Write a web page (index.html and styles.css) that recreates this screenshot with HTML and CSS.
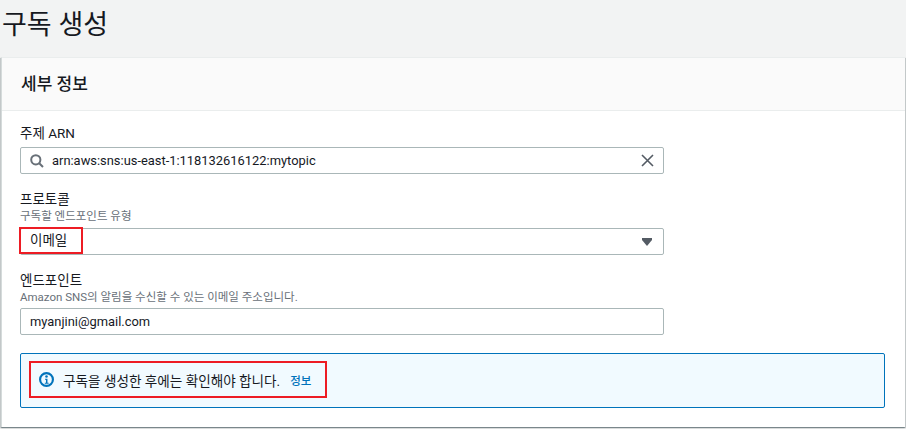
FILE: index.html
```html
<!DOCTYPE html>
<html lang="ko">
<head>
<meta charset="utf-8">
<title>구독 생성</title>
<link rel="stylesheet" href="styles.css">
</head>
<body>
<h1 class="page-title">구독 생성</h1>
<section class="card">
  <header class="card-header"><h2>세부 정보</h2></header>
  <div class="card-body">
    <div class="field field-arn">
      <label class="label">주제 ARN</label>
      <div class="control">
        <svg class="icon-search" width="14" height="14" viewBox="0 0 14 14"><circle cx="5.8" cy="5.8" r="4.6" fill="none" stroke="#687078" stroke-width="2"/><path d="M9.2 9.2L13 13" stroke="#687078" stroke-width="2"/></svg>
        <span class="value value-latin grow">arn:aws:sns:us-east-1:118132616122:mytopic</span>
        <svg class="icon-x" width="13" height="13" viewBox="0 0 13 13"><path d="M1 1L12 12M12 1L1 12" stroke="#545b64" stroke-width="1.6"/></svg>
      </div>
    </div>
    <div class="field field-protocol">
      <label class="label">프로토콜</label>
      <p class="desc">구독할 엔드포인트 유형</p>
      <div class="control control-select">
        <span class="value value-select grow">이메일</span>
        <svg class="icon-caret" width="10" height="8" viewBox="0 0 10 8"><path d="M0 0H10V2L5 8L0 2Z" fill="#545b64"/></svg>
        <span class="mark mark-select"></span>
      </div>
    </div>
    <div class="field field-endpoint">
      <label class="label">엔드포인트</label>
      <p class="desc">Amazon SNS의 알림을 수신할 수 있는 이메일 주소입니다.</p>
      <div class="control"><span class="value value-latin">myanjini@gmail.com</span></div>
    </div>
    <div class="alert">
      <div class="alert-inner">
        <svg class="icon-info" width="15" height="15" viewBox="0 0 14 14"><circle cx="7" cy="7" r="6" fill="none" stroke="#0073bb" stroke-width="2"/><circle cx="7" cy="4.2" r="1.2" fill="#0073bb"/><path d="M5.6 6.2H7.9V10H9V11H5.4V10H6.5V7.2H5.6Z" fill="#0073bb"/></svg>
        <span class="alert-text">구독을 생성한 후에는 확인해야 합니다.</span>
        <a class="alert-link">정보</a>
      </div>
    </div>
  </div>
</section>
</body>
</html>
```
FILE: styles.css
```css
* { box-sizing: border-box; }
html, body { margin: 0; padding: 0; }
body {
  width: 906px;
  height: 429px;
  overflow: hidden;
  background: #f2f3f3;
  color: #16191f;
  font-family: Roboto, "Noto Sans CJK KR", sans-serif;
  font-size: 13.5px;
}
.page-title {
  margin: 0;
  height: 57px;
  padding: 7px 0 0 2px;
  font-size: 27px;
  line-height: 36px;
  font-weight: 400;
}
.card {
  margin-left: 1px;
  width: 904px;
  height: 370px;
  background: #fff;
  border-top: 1px solid #eaeded;
  border-left: 1px solid #d5dbdb;
  box-shadow: 0 1px 1px 0 rgba(0, 28, 36, .3), 1px 1px 1px 0 rgba(0, 28, 36, .15), -1px 1px 1px 0 rgba(0, 28, 36, .15);
}
.card-header {
  height: 53px;
  padding: 0 0 3px 19px;
  background: #fafafa;
  border-bottom: 1px solid #eaeded;
  display: flex;
  align-items: center;
}
.card-header h2 {
  margin: 0;
  font-size: 17px;
  font-weight: 500;
}
.card-body { padding: 0 19px 0 18px; }
.field { width: 644px; }
.field-arn { padding-top: 13px; }
.field-protocol { padding-top: 16px; }
.field-endpoint { padding-top: 16px; }
.label {
  display: block;
  font-size: 13.5px;
  line-height: 18px;
  height: 18px;
}
.field-arn .label { margin-bottom: 5px; }
.desc {
  margin: 0 0 4px;
  padding-top: 1px;
  font-size: 11.5px;
  line-height: 14px;
  color: #687078;
}
.field-protocol .desc { margin-bottom: 5px; }
.control {
  position: relative;
  height: 27px;
  display: flex;
  align-items: center;
  gap: 8px;
  padding: 0 9px 0 9px;
  background: #fff;
  border: 1px solid #aab7b8;
  border-radius: 2px;
}
.grow { flex: 1; }
.value { font-size: 13.5px; line-height: 18px; }
.value-latin { font-size: 12.9px; color: #16191f; }
.value-select { padding-bottom: 3px; }
.icon-search, .icon-x, .icon-caret { flex: none; }
.control-select { padding-right: 11px; }
.mark {
  border: 2px solid #ed1c24;
  pointer-events: none;
}
.mark-select {
  position: absolute;
  left: -2px;
  top: -2px;
  width: 64px;
  height: 27px;
}
.alert {
  margin-top: 18px;
  width: 865px;
  height: 55px;
  padding: 7px 8px;
  background: #f1faff;
  border: 1px solid #0073bb;
  border-radius: 2px;
}
.alert-inner {
  display: flex;
  align-items: center;
  width: 298px;
  height: 37px;
  padding-left: 8px;
  border: 2px solid #ed1c24;
}
.icon-info { flex: none; margin-right: 9px; }
.alert-text { font-size: 13.6px; }
.alert-link { margin-left: 10px; font-size: 11.5px; color: #0073bb; font-weight: 500; }
```
